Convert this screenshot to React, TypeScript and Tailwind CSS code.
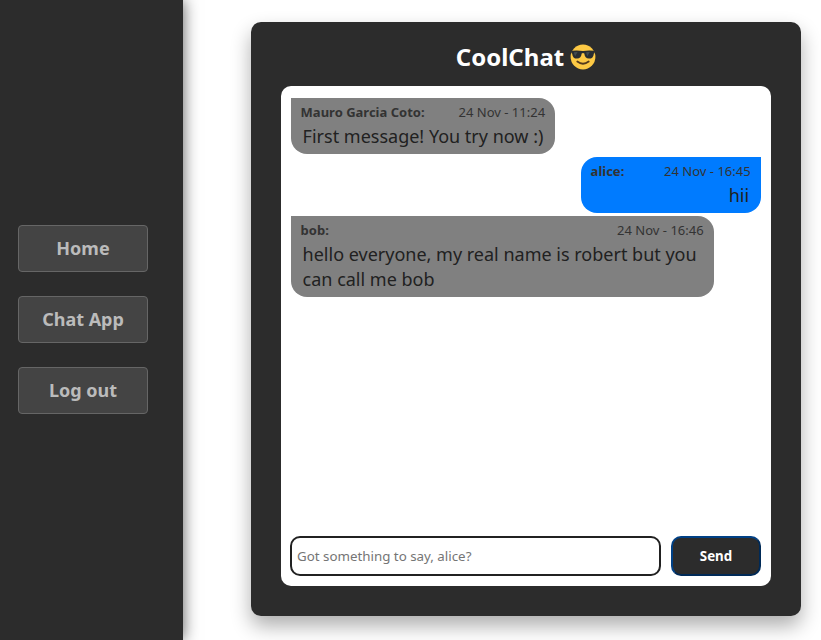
import React from 'react';

type Message = { author: string; time: string; text: string; own?: boolean };

const messages: Message[] = [
  { author: 'Mauro Garcia Coto', time: '24 Nov - 11:24', text: 'First message! You try now :)' },
  { author: 'alice', time: '24 Nov - 16:45', text: 'hii', own: true },
  { author: 'bob', time: '24 Nov - 16:46', text: 'hello everyone, my real name is robert but you can call me bob' },
];

function CoolFace() {
  return (
    <svg viewBox="0 0 26 26" className="h-[26px] w-[26px]" aria-hidden="true">
      <circle cx="13" cy="13" r="12.4" fill="#fdc944" />
      <path d="M1.3 6.8Q7 6 13 6.9Q19 6 24.7 6.8V8.8L23.9 9.4C23.5 13 22 14.6 18.9 14.6C16 14.6 14.8 12.6 14.3 9.4Q13 8.5 11.7 9.4C11.2 12.6 10 14.6 7.1 14.6C4 14.6 2.5 13 2.1 9.4L1.3 8.8Z" fill="#292d30" />
      <path d="M4 8.3L7.6 8L5.2 12.2Q4 10.8 4 8.3ZM16.2 8.3L19.8 8L17.4 12.2Q16.2 10.8 16.2 8.3Z" fill="#434c50" />
      <path d="M7.3 17.5Q13 22 18.7 17.5" fill="none" stroke="#543a1c" strokeWidth="1.8" strokeLinecap="round" />
    </svg>
  );
}

function Bubble({ message }: { message: Message }) {
  const side = message.own
    ? 'self-end rounded-l-[16px] rounded-br-[16px] bg-[#007bff] text-right'
    : 'self-start rounded-r-[16px] rounded-bl-[16px] bg-[#808080]';
  return (
    <div className={`min-w-[180px] max-w-[423px] pt-[5px] pb-[5px] ${side}`}>
      <div className="mb-[3px] flex justify-between gap-[34px] pr-[10.4px] pl-[9.6px] text-[13px] leading-[18px] text-[#333]">
        <span className="font-bold">{message.author}:</span>
        <span>{message.time}</span>
      </div>
      <p className="pr-[11.9px] pl-[11.6px] text-[18px] leading-[25px] text-[#212121]">{message.text}</p>
    </div>
  );
}

export default function App() {
  return (
    <div className="flex h-screen overflow-hidden bg-white font-['Noto_Sans',sans-serif]">
      <nav className="flex w-[183px] shrink-0 flex-col justify-center gap-6 bg-[#2c2c2c] pb-[2px] pl-[18px] shadow-[0_0_15px_rgba(0,0,0,0.65)]">
        {['Home', 'Chat App', 'Log out'].map((label) => (
          <button key={label} className="h-[47px] w-[130px] rounded-[4px] border border-[#666] bg-[#444] text-[18px] leading-[25px] font-bold text-[#bbb]">
            {label}
          </button>
        ))}
      </nav>
      <main className="mt-[22px] ml-[68px] flex h-[594px] w-[550px] shrink-0 flex-col rounded-[10px] bg-[#2c2c2c] px-[30px] shadow-[0_10px_20px_rgba(0,0,0,0.32)]">
        <h1 className="flex h-[64px] items-center justify-center gap-[6px] pt-[5px] text-[24px] leading-[33px] font-bold text-white">
          CoolChat <CoolFace />
        </h1>
        <section className="flex h-[500px] flex-col rounded-[10px] bg-white pt-[12px] pr-[10px] pb-[10px] pl-[9px]">
          <div className="flex flex-1 flex-col gap-[3px] pl-px">
            {messages.map((message) => <Bubble key={message.author} message={message} />)}
          </div>
          <form className="flex h-[40px] gap-[10px]" onSubmit={(event) => event.preventDefault()}>
            <input
              className="w-[371px] rounded-[10px] border-2 border-[#212121] px-[5px] pt-[2px] text-[13.333px] placeholder:text-[#757575]"
              placeholder="Got something to say, alice?"
            />
            <button className="w-[90px] rounded-[10px] border-2 border-t-[#004085] border-l-[#004085] border-r-[#002a57] border-b-[#002a57] bg-[#2c2c2c] pt-[2px] text-[13.333px] font-bold text-white">
              Send
            </button>
          </form>
        </section>
      </main>
    </div>
  );
}
